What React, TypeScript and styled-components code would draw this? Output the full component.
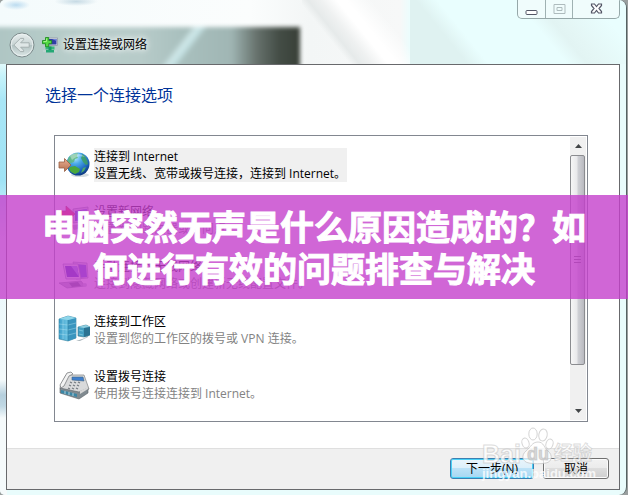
import React from "react";
import styled, { createGlobalStyle } from "styled-components";

const GlobalStyle = createGlobalStyle`
  *, *::before, *::after { box-sizing: border-box; }
  html, body, #root { margin: 0; padding: 0; }
  body {
    background: #9a9f9f;
    font-family: "Open Sans", "Noto Sans CJK SC", sans-serif;
    font-size: 12px;
    color: #000;
  }
  button { font: inherit; color: inherit; margin: 0; padding: 0; }
`;

const Page = styled.main`
  position: relative;
  display: flex;
  min-height: 100vh;
  padding-right: 1px;
`;

const Window = styled.section`
  flex: 1;
  min-width: 0;
  display: flex;
  flex-direction: column;
  padding: 0 6px 5px 6px;
  border-right: 1px solid #566263;
  border-radius: 5px 8px 8px 5px;
  background:
    linear-gradient(180deg, #c4dcdc00 60px, #c6f3fa 76px, #a9e6f6 100px, #9fe3f5 180px, #e8f8fc 240px, #f4fafb 380px, #b5cfdd 395px, #c0d8e4 406px, #f5fafb 418px) left / 7px 100% no-repeat,
    #e9fcfc;
`;

const TitleBar = styled.header`
  position: relative;
  display: flex;
  justify-content: space-between;
  height: 64px;
  margin: 0 -6px;
  padding: 0 6px 0 9px;
  border-radius: 5px 8px 0 0;
  overflow: hidden;
  background:
    radial-gradient(ellipse at center, #bcdcf0 0, #bcdcf000 70%) 2px 0 / 28px 10px no-repeat,
    radial-gradient(ellipse at center, #c6dae4 0, #c6dae400 70%) 54px -3px / 44px 9px no-repeat,
    linear-gradient(51deg, transparent 30%, #e6eaea 36%, #eff1f1 44%, #ffffff 54%, #ffffff 60%, #ffffff00 76%) 302px 0 / 108px 64px no-repeat,
    linear-gradient(51deg, #dff2f1 0, #dff2f1 38%, #e9fefe 52%) 410px 0 / 100px 64px no-repeat,
    linear-gradient(51deg, #e9fefe 34%, #e2f4f3 46%, #e4f6f5 54%, #e9fefe 80%) 510px 0 / 116px 64px no-repeat,
    linear-gradient(90deg, #f4fbfc, #fbfdfd 250px, #f3f6f6 310px, #f7f8f8 400px, #e9fefe 412px);
`;

const Glass = styled.div`
  position: relative;
  isolation: isolate;
  display: flex;
  align-items: center;
  align-self: flex-end;
  width: 291px;
  height: 38px;
  &::before {
    content: "";
    position: absolute;
    z-index: -1;
    inset: 1px 0 -8px -18px;
    background:
      linear-gradient(128deg, transparent 46%, #cfe7e8 52%, #c6e3e5 56%, transparent 62%) 146px 0 / 80px 46px no-repeat,
      linear-gradient(90deg, #aec5c3 0, #b9cecb 90px, #b7cbc9 150px, #a9c0be 190px, #a0b6b4 240px, #66716c 266px, #444d46 288px, #383f37 309px);
    filter: blur(2px);
  }
`;

const BackButton = styled.button`
  width: 26px;
  height: 26px;
  border: 0;
  background: none;
  svg { display: block; }
`;

const Caption = styled.h1`
  display: flex;
  align-items: center;
  gap: 5px;
  margin: 0 0 0 7px;
  font-size: 12px;
  font-weight: 400;
  line-height: 18px;
  text-shadow: 0 0 5px #fff, 0 0 8px #fff;
`;

const WindowControls = styled.div`
  display: flex;
  height: 19px;
  border: 1px solid #96a8a9;
  border-top: 0;
  border-radius: 0 0 5px 5px;
  background: #f0fcfc;
`;

const ControlButton = styled.button<{ $wide?: boolean }>`
  display: grid;
  place-items: center;
  width: ${({ $wide }) => ($wide ? 47 : 27)}px;
  border: 0;
  background: none;
  & + & { border-left: 1px solid #9fb1b2; }
`;

const Panel = styled.div`
  flex: 1;
  display: flex;
  flex-direction: column;
  border: 1px solid #68696c;
  background: #fff;
`;

const Content = styled.div`
  flex: 1;
  display: flex;
  flex-direction: column;
  padding: 18px 31px 26px 38px;
`;

const Heading = styled.h2`
  margin: 0 0 28px;
  color: #003399;
  font-size: 16px;
  font-weight: 400;
  line-height: 24px;
`;

const ListFrame = styled.div`
  flex: 1;
  display: flex;
  margin-left: 9px;
  padding: 1px;
  border: 1px solid #828790;
`;

const OptionList = styled.ul`
  flex: 1;
  min-width: 0;
  display: flex;
  flex-direction: column;
  gap: 21px;
  margin: 0;
  padding: 11px 2px;
  list-style: none;
`;

const Option = styled.button`
  display: flex;
  align-items: center;
  gap: 4px;
  border: 0;
  background: none;
  text-align: left;
  svg { display: block; flex: none; }
`;

const OptionText = styled.span<{ $selected?: boolean }>`
  display: flex;
  flex-direction: column;
  padding-right: 1px;
  line-height: 17px;
  white-space: nowrap;
  background: ${({ $selected }) => ($selected ? "#f0f0f0" : "transparent")};
`;

const Description = styled.span<{ $selected?: boolean }>`
  color: ${({ $selected }) => ($selected ? "#000" : "#838383")};
`;

const ScrollBar = styled.div`
  display: flex;
  flex-direction: column;
  width: 16px;
  background: #f0f0f0;
`;

const ScrollArrow = styled.button`
  display: grid;
  place-items: center;
  height: 18px;
  border: 0;
  background: none;
`;

const ScrollTrack = styled.div`
  flex: 1;
  display: flex;
  flex-direction: column;
`;

const ScrollThumb = styled.div`
  display: grid;
  place-items: center;
  height: 85%;
  margin-right: 1px;
  border: 1px solid #8b8c90;
  border-radius: 2px;
  background: linear-gradient(90deg, #f6f6f6 0, #e9e9eb 45%, #cfd0d5 55%, #b9bac0 100%);
`;

const Footer = styled.footer`
  display: flex;
  justify-content: flex-end;
  gap: 9px;
  padding: 9px 10px 10px;
  border-top: 1px solid #dfdfdf;
  background: #f0f0f0;
`;

const ActionButton = styled.button<{ $primary?: boolean }>`
  width: ${({ $primary }) => ($primary ? 84 : 66)}px;
  height: 21px;
  line-height: 18px;
  border-radius: 3px;
  border: 1px solid ${({ $primary }) => ($primary ? "#3c7fb1" : "#707070")};
  box-shadow: inset 0 0 0 1px ${({ $primary }) => ($primary ? "#48d1f7" : "#fbfbfb")};
  background: ${({ $primary }) =>
    $primary
      ? "linear-gradient(#eaf5fb 0, #dceffa 48%, #bce2f7 50%, #a5d7f2 100%)"
      : "linear-gradient(#f2f2f2 0, #ebebeb 48%, #dddddd 50%, #cfcfcf 100%)"};
`;

const Banner = styled.div`
  position: absolute;
  top: 195px;
  left: 0;
  right: 0;
  padding: 10px 40px;
  background: rgba(196, 64, 204, 0.8);
  color: #fff;
  font-family: "Noto Sans CJK SC", sans-serif;
  font-size: 34px;
  font-weight: 700;
  line-height: 42px;
  text-align: center;
  -webkit-text-stroke: 1px #fff;
`;

const Watermark = styled.div`
  position: absolute;
  right: 34px;
  bottom: 14px;
  width: 112px;
  pointer-events: none;
  color: rgba(255, 255, 255, 0.8);
  font-family: "Liberation Sans", "Noto Sans CJK SC", sans-serif;
`;

const WatermarkLogo = styled.div`
  display: flex;
  align-items: flex-end;
  height: 40px;
  font-size: 25px;
  font-weight: 700;
  line-height: 25px;
  -webkit-text-stroke: 1px rgba(185, 185, 185, 0.5);
  svg { display: block; }
`;

const Paw = styled.span`
  position: relative;
  width: 33px;
  height: 40px;
`;

const PawText = styled.span`
  position: absolute;
  left: 6px;
  bottom: 3px;
  color: rgba(205, 205, 205, 0.8);
  font-size: 18px;
  line-height: 20px;
`;

const WatermarkSuffix = styled.span`
  font-size: 19px;
  line-height: 26px;
`;

const WatermarkSite = styled.div`
  font-size: 13px;
  font-weight: 700;
  line-height: 14px;
  text-align: center;
  white-space: nowrap;
`;

const BackIcon = () => (
  <svg width="26" height="26" viewBox="0 0 26 26" aria-hidden="true">
    <defs>
      <linearGradient id="orb" x2="0" y2="1">
        <stop stopColor="#e8eeee" />
        <stop offset=".48" stopColor="#c9d5d5" />
        <stop offset=".52" stopColor="#b4c4c4" />
        <stop offset="1" stopColor="#dce7e6" />
      </linearGradient>
    </defs>
    <circle cx="13" cy="13" r="12" fill="url(#orb)" stroke="#7d8b8c" />
    <circle cx="13" cy="13" r="10.8" fill="none" stroke="#edf4f4" strokeWidth=".8" />
    <path d="M4.8 13 11.4 6.4h3.2v1.4l-3 3h8.6v4.4h-8.6l3 3v1.4h-3.2Z" fill="#dfe7e7" stroke="#a0acac" strokeWidth=".9" />
  </svg>
);

const NetworkIcon = () => (
  <svg width="16" height="16" viewBox="0 0 16 16" aria-hidden="true">
    <rect x="6" y="1" width="9.5" height="7.5" fill="#d8dce4" stroke="#8c929e" strokeWidth=".7" />
    <path d="M7 2h7.5v5.5H7Z" fill="#303da5" />
    <path d="M10 2h4.5v2Z" fill="#6f87da" />
    <path d="M3.5 9.5h9v3h-9Z" fill="#36b878" />
    <path d="M6.5 9.5h3v4h-3Z" fill="#159861" />
    <path d="M1 13.5h14v1H1Z" fill="#c7dad4" />
    <path d="M4 13h8v2.5H4Z" fill="#23a875" />
    <path d="M3.5.5h3.2v3h3v3.2h-3v3H3.5v-3h-3V3.5h3Z" fill="#55d843" stroke="#16851b" strokeWidth=".8" />
    <path d="M4.5 1.5v3h-3" stroke="#b9f79c" fill="none" strokeWidth=".8" />
  </svg>
);

const GlobeIcon = () => (
  <svg width="32" height="32" viewBox="0 0 32 32" aria-hidden="true">
    <defs>
      <radialGradient id="sea" cx=".38" cy=".22" r=".8">
        <stop stopColor="#b8ebff" />
        <stop offset=".35" stopColor="#4aa9e8" />
        <stop offset=".75" stopColor="#1d66bd" />
        <stop offset="1" stopColor="#0b377f" />
      </radialGradient>
      <linearGradient id="arrow" x2="0" y2="1">
        <stop stopColor="#e9b095" />
        <stop offset="1" stopColor="#b56e4d" />
      </linearGradient>
    </defs>
    <ellipse cx="22" cy="26" rx="9" ry="2" fill="#b8c4cb" opacity=".6" />
    <circle cx="20" cy="15" r="11.5" fill="url(#sea)" />
    <path d="M11 8c3-3 6-4 9-4l-1 3 1 2-3 1-1 3-3 1-2 2-2-2c0-2 1-4 2-6Z" fill="#62b97c" opacity=".85" />
    <path d="m24 5 3 2 2 4 1 4-2 1-3-3-2-4 1-2Z" fill="#3d9f63" opacity=".85" />
    <path d="m12 18 5-1 5 3-1 3-4 2-4-2-2-3Z" fill="#49a83c" />
    <path d="m25 19 3-1-2 4-3 2Z" fill="#4fa968" />
    <path d="M12 7c4-4 11-3 15 1-5-2-10 0-13 3Z" fill="#fff" opacity=".35" />
    <path d="M1 13h5.500V9.500L13 16l-6.500 6.500V19H1Z" fill="url(#arrow)" stroke="#986044" strokeWidth=".8" />
  </svg>
);

const NewNetworkIcon = () => (
  <svg width="32" height="32" viewBox="0 0 32 32" aria-hidden="true">
    <path d="M15 5 30 3v14l-15 2Z" fill="#d0d4e0" stroke="#747b91" strokeWidth=".7" />
    <path d="m17 7 12-2v11l-12 1Z" fill="#304cc2" />
    <path d="m23 6 6-1v11Z" fill="#627ce0" />
    <path d="m13 21 15-1 3 3-15 3Z" fill="#aab1bd" />
    <path d="M1 7h7V2l9 8-8 7v-5H1Z" fill="#f02030" stroke="#a01f2c" strokeWidth=".7" />
  </svg>
);

const WirelessIcon = () => (
  <svg width="32" height="32" viewBox="0 0 32 32" aria-hidden="true">
    <path d="m15 3 14 1 1 15-12 1Z" fill="#cbd0e0" stroke="#8189a5" strokeWidth=".7" />
    <path d="m17 5 11 1 1 12-10 1Z" fill="#414bd0" />
    <path d="M5 5h15l3 15H8Z" fill="#dfe3ef" stroke="#7981a2" strokeWidth=".7" />
    <path d="M7 7h12l2 11H9Z" fill="#2420b0" />
    <path d="m13 7 6 0 2 11Z" fill="#7684e5" />
    <path d="m1 24 22-2 4 5-18 2Z" fill="#a9b0be" stroke="#727b8c" strokeWidth=".7" />
    <path d="m11 24 9-1 3 4-9 1Z" fill="#526075" />
    <circle cx="27" cy="26" r="2" fill="#bfc3cf" />
  </svg>
);

const WorkplaceIcon = () => (
  <svg width="32" height="32" viewBox="0 0 32 32" aria-hidden="true">
    <defs>
      <linearGradient id="tower"><stop stopColor="#3d9fca" /><stop offset=".45" stopColor="#68bfe0" /><stop offset="1" stopColor="#389bc4" /></linearGradient>
    </defs>
    <path d="m18 27 9-3 5-6-2 5-8 4Z" fill="#adb9be" />
    <path d="m1 5 9-3 8 2v20l-8 3-9-2Z" fill="url(#tower)" stroke="#327f9e" strokeWidth=".6" />
    <path d="m10 6 8-2v20l-8 3Z" fill="#3a95be" />
    <path d="m1 5 9-3 8 2-8 2Z" fill="#8fd6ea" />
    <path d="M5 6v19M1 10l9 1 8-2M1 15l9 1 8-2M1 20l9 1 8-2" stroke="#b8e8f5" strokeOpacity=".6" fill="none" strokeWidth=".7" />
    <path d="M10 6v21" stroke="#2b7fa3" strokeWidth=".6" />
    <path d="m20 13 8-2 4 2v8l-6 2-6-1Z" fill="#439fc2" stroke="#397b91" strokeWidth=".6" />
    <path d="m20 13 8-2 4 2-6 1Z" fill="#91cfe0" />
    <path d="M26 14v9l6-2v-8Z" fill="#2b7392" />
    <path d="m21 16 4 1m-4 3 4 1" stroke="#a8e4ee" strokeOpacity=".7" strokeWidth=".7" />
  </svg>
);

const PhoneIcon = () => (
  <svg width="32" height="32" viewBox="0 0 32 32" aria-hidden="true">
    <path d="m2 18 6-12 18 0 5 14-9 6-19-4Z" fill="#d9dadb" stroke="#8b8e8f" strokeWidth=".8" />
    <path d="m2 19 19 4 9-4v5l-9 6-19-6Z" fill="#808a90" stroke="#5b6368" strokeWidth=".6" />
    <path d="m3 21 16 4v3L3 24Z" fill="#3a87a6" />
    <path d="M7 22v3m4-2v3m4-2v3" stroke="#b7ced6" />
    <path d="m14 8 11 0 1 4-12-1Z" fill="#3f7fce" stroke="#426483" strokeWidth=".6" />
    <path d="m9 4 4-1 2 2-4 2-5 10-3 2-1-3Z" fill="#f3f3f3" stroke="#7b7e80" strokeWidth=".8" />
    <path d="m12 13 2 1m2-1 2 1m2-1 2 1M11 16l2 1m2-1 2 1m2-1 2 1M10 19l2 1m2-1 2 1m2-1 2 1" stroke="#73797e" strokeWidth="1.200" />
    <path d="m22 22 8-4v2l-8 5Z" fill="#d6d6d6" />
  </svg>
);

const PawIcon = () => (
  <svg width="33" height="38" viewBox="0 0 33 38" aria-hidden="true">
    <g fill="#ffffff" fillOpacity=".75" stroke="#bdbdbd" strokeOpacity=".65">
      <ellipse cx="12" cy="7" rx="4.200" ry="6" />
      <ellipse cx="22" cy="8" rx="4.200" ry="6" transform="rotate(12 22 8)" />
      <ellipse cx="4.500" cy="16" rx="3.500" ry="5" transform="rotate(-18 4.500 16)" />
      <ellipse cx="28.500" cy="17" rx="3.500" ry="5" transform="rotate(18 28.500 17)" />
      <path d="M17 15c6 0 6 6 10 9 5 4 4 11-2 12-5 1-12 1-17 0-7-1-8-8-3-12 5-4 6-9 12-9Z" />
    </g>
  </svg>
);

const ArrowGlyph = ({ down = false }: { down?: boolean }) => (
  <svg width="7" height="4" viewBox="0 0 7 4" aria-hidden="true">
    <path d={down ? "M0 0h7L3.500 4Z" : "M0 4h7L3.500 0Z"} fill="#424547" />
  </svg>
);

const options = [
  { title: "连接到 Internet", description: "设置无线、宽带或拨号连接，连接到 Internet。", Icon: GlobeIcon },
  { title: "设置新网络", description: "配置新的路由器或访问点。", Icon: NewNetworkIcon },
  { title: "手动连接到无线网络", description: "连接到隐藏网络或创建新无线配置文件。", Icon: WirelessIcon },
  { title: "连接到工作区", description: "设置到您的工作区的拨号或 VPN 连接。", Icon: WorkplaceIcon },
  { title: "设置拨号连接", description: "使用拨号连接连接到 Internet。", Icon: PhoneIcon },
];

export default function App() {
  const [selected, setSelected] = React.useState(0);
  return (
    <>
      <GlobalStyle />
      <Page>
        <Window>
          <TitleBar>
            <Glass>
              <BackButton aria-label="返回"><BackIcon /></BackButton>
              <Caption><NetworkIcon />设置连接或网络</Caption>
            </Glass>
            <WindowControls>
              <ControlButton aria-label="最小化">
                <svg width="13" height="15" viewBox="0 0 13 15"><rect x="1" y="8.500" width="11" height="4" rx="1" fill="#fff" stroke="#535666" /></svg>
              </ControlButton>
              <ControlButton aria-label="最大化" disabled>
                <svg width="13" height="11" viewBox="0 0 13 11"><path d="M1 .5h11v9H1Zm3 3h5v3H4Z" fill="none" stroke="#aebbbd" /></svg>
              </ControlButton>
              <ControlButton aria-label="关闭" $wide>
                <svg width="13" height="12" viewBox="0 0 13 12"><path d="M1.500 1h3l2 2.500 2-2.500h3v1.500L9 5.500l2.500 3V10h-3l-2-2.500-2 2.500h-3V8.500L4 5.500l-2.500-3Z" fill="#fff" stroke="#535666" strokeWidth="1.200" /></svg>
              </ControlButton>
            </WindowControls>
          </TitleBar>
          <Panel>
            <Content>
              <Heading>选择一个连接选项</Heading>
              <ListFrame>
                <OptionList>
                  {options.map(({ title, description, Icon }, index) => (
                    <li key={title}>
                      <Option aria-pressed={selected === index} onClick={() => setSelected(index)}>
                        <Icon />
                        <OptionText $selected={selected === index}>
                          <span>{title}</span>
                          <Description $selected={selected === index}>{description}</Description>
                        </OptionText>
                      </Option>
                    </li>
                  ))}
                </OptionList>
                <ScrollBar>
                  <ScrollArrow aria-label="向上滚动"><ArrowGlyph /></ScrollArrow>
                  <ScrollTrack>
                    <ScrollThumb>
                      <svg width="7" height="8" viewBox="0 0 7 8" aria-hidden="true"><path d="M0 .5h7M0 3.500h7M0 6.500h7" stroke="#686b70" /></svg>
                    </ScrollThumb>
                  </ScrollTrack>
                  <ScrollArrow aria-label="向下滚动"><ArrowGlyph down /></ScrollArrow>
                </ScrollBar>
              </ListFrame>
            </Content>
            <Footer>
              <ActionButton $primary>下一步(N)</ActionButton>
              <ActionButton>取消</ActionButton>
            </Footer>
          </Panel>
        </Window>
        <Banner>电脑突然无声是什么原因造成的？如何进行有效的问题排查与解决</Banner>
        <Watermark>
          <WatermarkLogo>
            <span>Bai</span>
            <Paw><PawIcon /><PawText>du</PawText></Paw>
            <WatermarkSuffix>经验</WatermarkSuffix>
          </WatermarkLogo>
          <WatermarkSite>jingyan.baidu.com</WatermarkSite>
        </Watermark>
      </Page>
    </>
  );
}
